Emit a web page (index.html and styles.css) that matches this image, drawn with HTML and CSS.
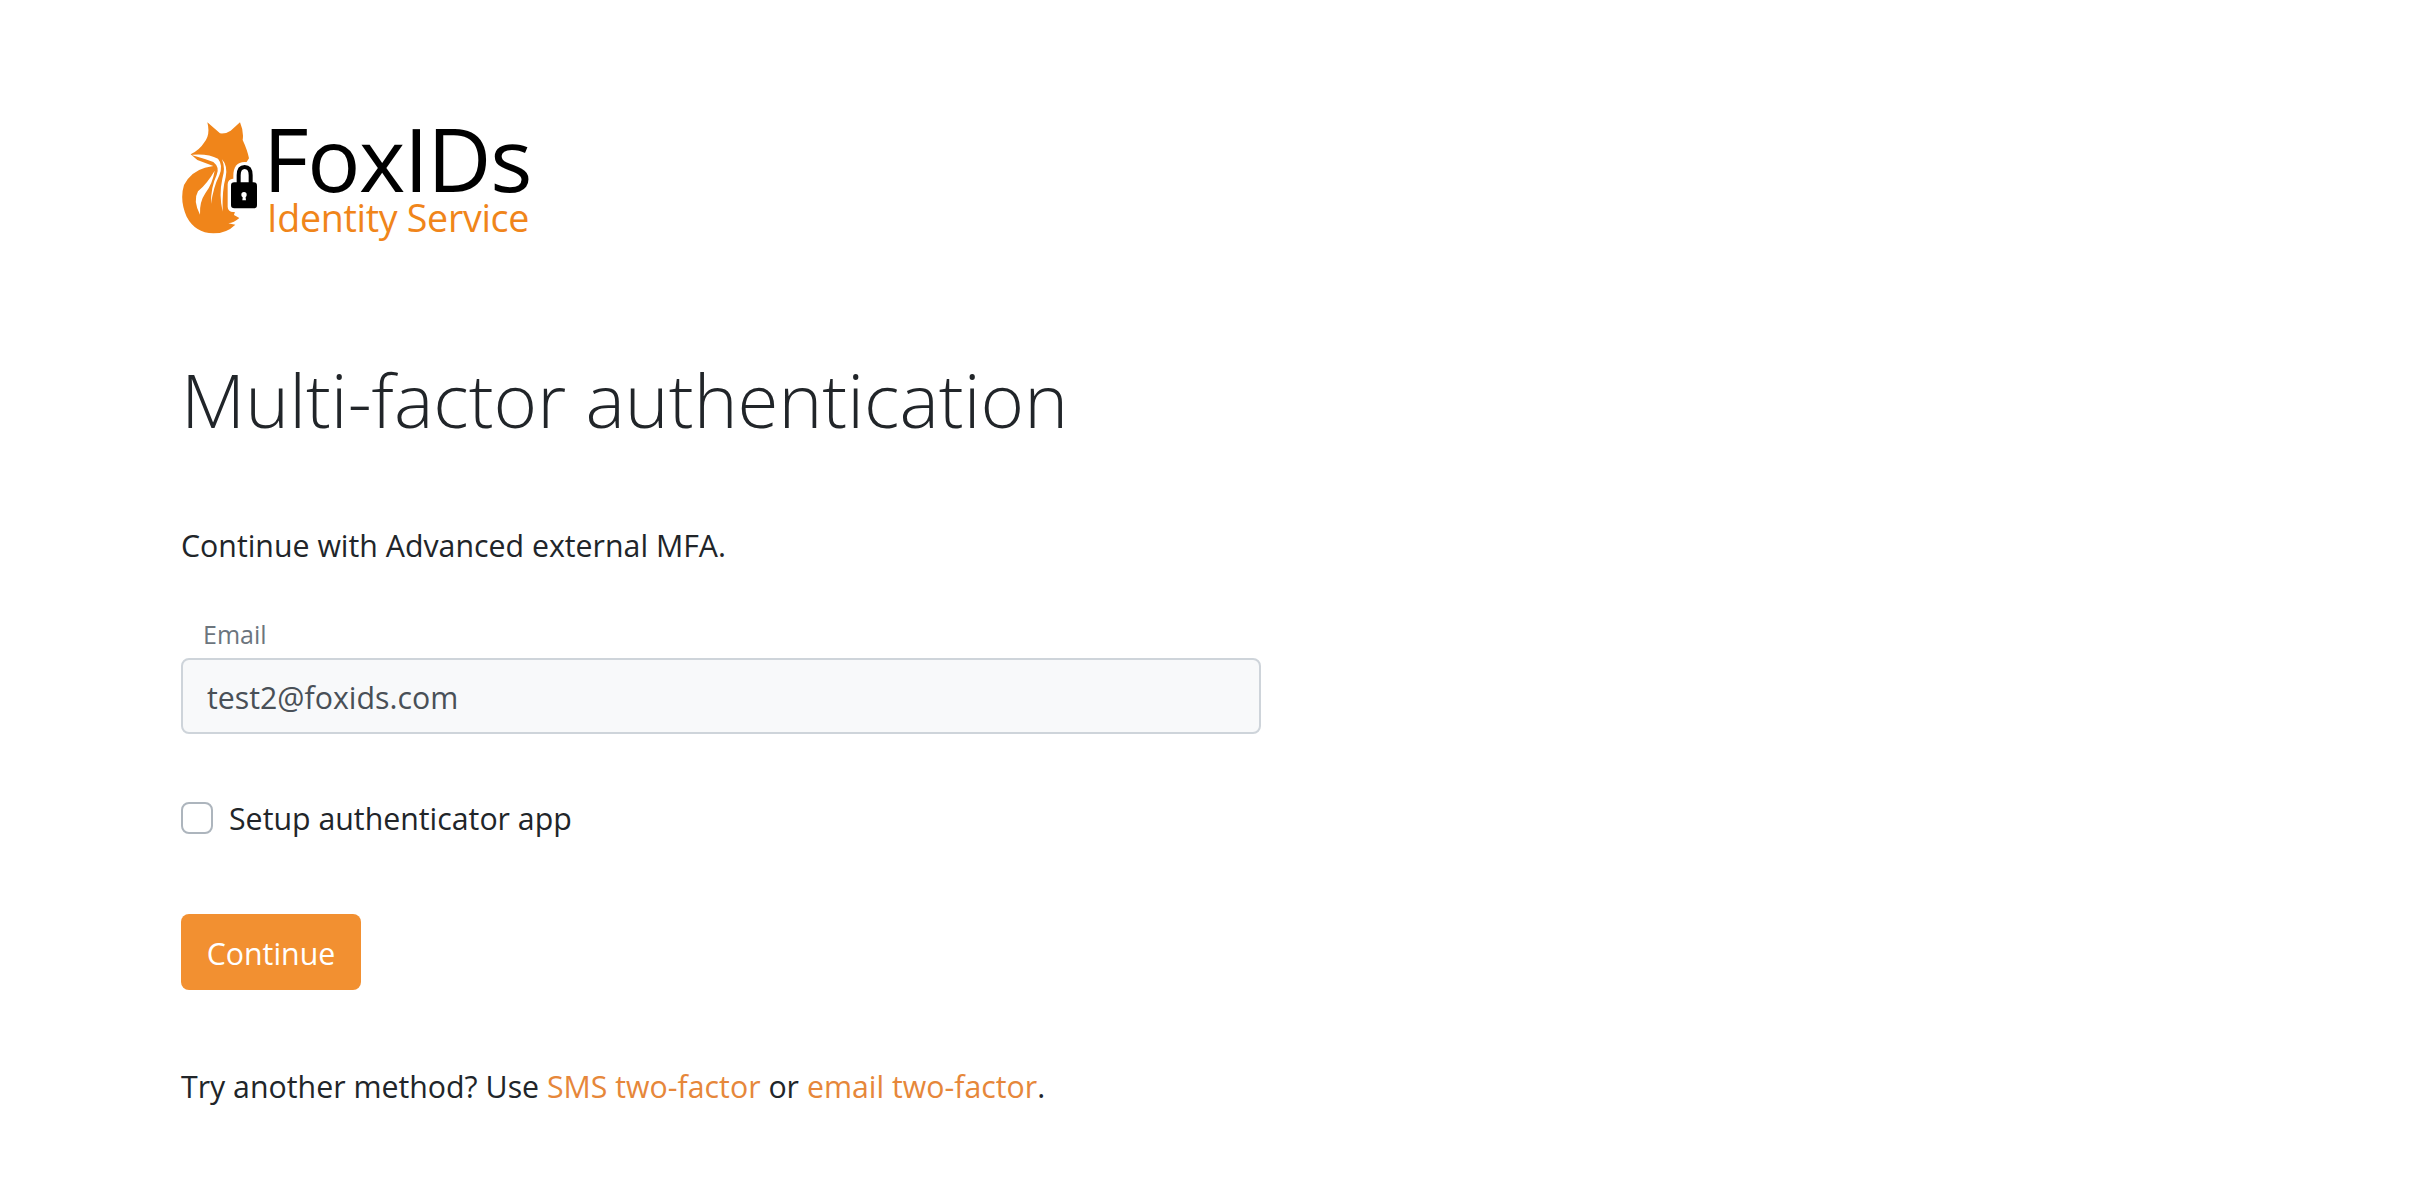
FILE: index.html
```html
<!DOCTYPE html>
<html lang="en">
<head>
<meta charset="utf-8">
<title>Multi-factor authentication</title>
<link rel="stylesheet" href="styles.css">
</head>
<body>
<main class="page">
  <header class="logo">
    <svg class="logo-mark" viewBox="60 60 240 345" aria-hidden="true">
      <path class="fox" d="M142 67 L180 100 Q198 102 212 92 L240 67 Q252 95 248 120 Q262 150 267 175 L256 192 L235 300 L222 345 L238 354 Q222 368 205 370 L226 374 Q200 400 160 400 Q105 398 80 350 Q58 300 72 255 Q92 215 135 203 L160 198 L112 180 L92 163 Q120 148 132 128 Q152 105 142 67 Z"/>
      <path class="fox-cut" d="M97 164 Q145 160 174 176 Q190 195 178 226 Q160 262 153 312 Q152 262 170 225 Q180 202 160 186 Q132 176 97 166 Z"/>
      <path class="fox-cut" d="M186 178 Q204 198 197 232 Q186 270 188 335 Q176 285 187 236 Q197 205 186 178 Z"/>
      <path class="fox-cut" d="M164 212 Q142 250 114 274 Q98 302 120 344 Q118 306 136 280 Q158 250 164 212 Z"/>
      <rect class="lock-halo" x="203" y="236" width="98" height="100" rx="16"/>
      <path class="lock-halo" d="M220 260 V228 Q220 186 254 186 Q288 186 288 228 V260 Z"/>
      <path class="lock-arc" d="M236 262 V226 Q236 201 254 201 Q272 201 272 226 V262"/>
      <rect class="lock-body" x="213" y="247" width="78" height="78" rx="10"/>
      <circle class="lock-hole" cx="252" cy="284" r="8"/>
      <path class="lock-hole" d="M249 286 H256 L258 301 H247 Z"/>
    </svg>
    <div class="logo-text">
      <div class="logo-name">FoxIDs</div>
      <div class="logo-sub">Identity Service</div>
    </div>
  </header>

  <h1 class="title">Multi-factor authentication</h1>

  <p class="intro">Continue with Advanced external MFA.</p>

  <form class="form">
    <label class="field-label" for="email">Email</label>
    <input class="field-input" id="email" type="text" value="test2@foxids.com" readonly>

    <label class="check">
      <input class="check-box" type="checkbox">
      <span>Setup authenticator app</span>
    </label>

    <button class="btn" type="button">Continue</button>
  </form>

  <p class="alt">Try another method? Use <a href="#">SMS two-factor</a> or <a href="#">email two-factor</a>.</p>
</main>
</body>
</html>
```

FILE: styles.css
```css
* { box-sizing: border-box; }
html, body { margin: 0; height: 100%; background: #fff; }
body {
  font-family: "Open Sans", "Noto Sans", sans-serif;
  font-size: 30.3px;
  color: #212529;
  overflow: hidden;
}
.page { padding: 120px 0 0 181px; width: 1261px; }

.logo { display: flex; align-items: flex-start; height: 115px; margin-left: -1px; }
.logo-mark { width: 80px; height: 115px; flex: none; }
.logo-text { margin-left: 3px; }
.logo-name { font-size: 88.5px; line-height: 76px; color: #000; letter-spacing: -1.4px; }
.logo-sub { font-size: 37.6px; line-height: 44px; margin-left: 4px; color: #f0851a; letter-spacing: -0.3px; }

.title { font-size: 74.4px; font-weight: 300; line-height: 96px; margin: 116px 0 0; }
.intro { margin: 75px 0 0; line-height: 48px; }

.form { margin: 0; }
.field-label { display: block; margin: 48px 0 0 22px; font-size: 25px; line-height: 32px; color: #6c757d; }
.field-input {
  display: block;
  width: 100%;
  height: 76px;
  margin-top: 8px;
  padding: 2px 24px 0;
  border: 2px solid #ced4da;
  border-radius: 8px;
  background: #f8f9fa;
  font: inherit;
  color: #495057;
  outline: none;
}
.check { display: flex; align-items: center; gap: 16px; margin-top: 61px; line-height: 48px; }
.check-box {
  appearance: none;
  flex: none;
  width: 32px;
  height: 32px;
  margin: -2px 0 0;
  border: 2px solid #adb5bd;
  border-radius: 8px;
  background: #fff;
}
.btn {
  display: block;
  width: 180px;
  height: 76px;
  margin-top: 71px;
  padding: 2px 0 0;
  border: 0;
  border-radius: 8px;
  background: #f29031;
  color: #fff;
  font: inherit;
}
.alt { margin: 73px 0 0; line-height: 48px; }
.alt a { color: #e6873a; text-decoration: none; }

.fox { fill: #f0851a; }
.fox-cut { fill: #fff; }
.lock-halo { fill: #fff; }
.lock-arc { fill: none; stroke: #000; stroke-width: 12; }
.lock-body { fill: #000; }
.lock-hole { fill: #fff; }
```
